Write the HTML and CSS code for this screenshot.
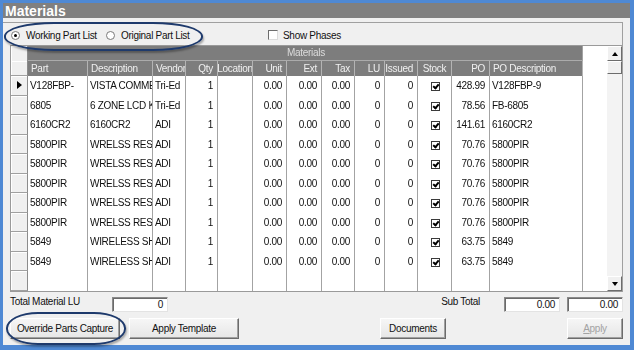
FILE: index.html
```html
<!DOCTYPE html>
<html lang="en">
<head>
    <meta charset="UTF-8">
    <meta name="viewport" content="width=device-width, initial-scale=1.0">
    <title>Materials</title>
    <link rel="stylesheet" href="styles.css">
</head>
<body>
    <div class="window">
        <div class="title">Materials</div>

        <div class="panel">
            <div class="frame">
                <!-- part list options -->
                <div class="options">
                    <label class="radio on"><span class="dot"></span>Working Part List</label>
                    <label class="radio"><span class="dot"></span>Original Part List</label>
                    <label class="check"><span class="box"></span>Show Phases</label>
                </div>

                <!-- materials grid -->
                <div class="grid">
                    <div class="sheet">
                        <div class="row band">
                            <div class="rh"></div>
                            <div class="cap">Materials</div>
                        </div>
                        <div class="row head">
                            <div class="rh"></div>
                            <div>Part</div>
                            <div>Description</div>
                            <div>Vendor</div>
                            <div class="num">Qty</div>
                            <div class="ctr">Location</div>
                            <div class="num">Unit</div>
                            <div class="num">Ext</div>
                            <div class="num">Tax</div>
                            <div class="num">LU</div>
                            <div class="num">Issued</div>
                            <div class="ctr">Stock</div>
                            <div class="num">PO</div>
                            <div>PO Description</div>
                        </div>

                        <div class="row">
                            <div class="rh cur"></div>
                            <div>V128FBP-</div>
                            <div>VISTA COMMERCIAL</div>
                            <div>Tri-Ed</div>
                            <div class="num">1</div>
                            <div></div>
                            <div class="num">0.00</div>
                            <div class="num">0.00</div>
                            <div class="num">0.00</div>
                            <div class="num">0</div>
                            <div class="num">0</div>
                            <div><i class="tick"></i></div>
                            <div class="num">428.99</div>
                            <div>V128FBP-9</div>
                        </div>
                        <div class="row">
                            <div class="rh"></div>
                            <div>6805</div>
                            <div>6 ZONE LCD KEYPAD</div>
                            <div>Tri-Ed</div>
                            <div class="num">1</div>
                            <div></div>
                            <div class="num">0.00</div>
                            <div class="num">0.00</div>
                            <div class="num">0.00</div>
                            <div class="num">0</div>
                            <div class="num">0</div>
                            <div><i class="tick"></i></div>
                            <div class="num">78.56</div>
                            <div>FB-6805</div>
                        </div>
                        <div class="row">
                            <div class="rh"></div>
                            <div>6160CR2</div>
                            <div>6160CR2</div>
                            <div>ADI</div>
                            <div class="num">1</div>
                            <div></div>
                            <div class="num">0.00</div>
                            <div class="num">0.00</div>
                            <div class="num">0.00</div>
                            <div class="num">0</div>
                            <div class="num">0</div>
                            <div><i class="tick"></i></div>
                            <div class="num">141.61</div>
                            <div>6160CR2</div>
                        </div>
                        <div class="row">
                            <div class="rh"></div>
                            <div>5800PIR</div>
                            <div>WRELSS RESIDENTIAL</div>
                            <div>ADI</div>
                            <div class="num">1</div>
                            <div></div>
                            <div class="num">0.00</div>
                            <div class="num">0.00</div>
                            <div class="num">0.00</div>
                            <div class="num">0</div>
                            <div class="num">0</div>
                            <div><i class="tick"></i></div>
                            <div class="num">70.76</div>
                            <div>5800PIR</div>
                        </div>
                        <div class="row">
                            <div class="rh"></div>
                            <div>5800PIR</div>
                            <div>WRELSS RESIDENTIAL</div>
                            <div>ADI</div>
                            <div class="num">1</div>
                            <div></div>
                            <div class="num">0.00</div>
                            <div class="num">0.00</div>
                            <div class="num">0.00</div>
                            <div class="num">0</div>
                            <div class="num">0</div>
                            <div><i class="tick"></i></div>
                            <div class="num">70.76</div>
                            <div>5800PIR</div>
                        </div>
                        <div class="row">
                            <div class="rh"></div>
                            <div>5800PIR</div>
                            <div>WRELSS RESIDENTIAL</div>
                            <div>ADI</div>
                            <div class="num">1</div>
                            <div></div>
                            <div class="num">0.00</div>
                            <div class="num">0.00</div>
                            <div class="num">0.00</div>
                            <div class="num">0</div>
                            <div class="num">0</div>
                            <div><i class="tick"></i></div>
                            <div class="num">70.76</div>
                            <div>5800PIR</div>
                        </div>
                        <div class="row">
                            <div class="rh"></div>
                            <div>5800PIR</div>
                            <div>WRELSS RESIDENTIAL</div>
                            <div>ADI</div>
                            <div class="num">1</div>
                            <div></div>
                            <div class="num">0.00</div>
                            <div class="num">0.00</div>
                            <div class="num">0.00</div>
                            <div class="num">0</div>
                            <div class="num">0</div>
                            <div><i class="tick"></i></div>
                            <div class="num">70.76</div>
                            <div>5800PIR</div>
                        </div>
                        <div class="row">
                            <div class="rh"></div>
                            <div>5800PIR</div>
                            <div>WRELSS RESIDENTIAL</div>
                            <div>ADI</div>
                            <div class="num">1</div>
                            <div></div>
                            <div class="num">0.00</div>
                            <div class="num">0.00</div>
                            <div class="num">0.00</div>
                            <div class="num">0</div>
                            <div class="num">0</div>
                            <div><i class="tick"></i></div>
                            <div class="num">70.76</div>
                            <div>5800PIR</div>
                        </div>
                        <div class="row">
                            <div class="rh"></div>
                            <div>5849</div>
                            <div>WIRELESS SHOCK</div>
                            <div>ADI</div>
                            <div class="num">1</div>
                            <div></div>
                            <div class="num">0.00</div>
                            <div class="num">0.00</div>
                            <div class="num">0.00</div>
                            <div class="num">0</div>
                            <div class="num">0</div>
                            <div><i class="tick"></i></div>
                            <div class="num">63.75</div>
                            <div>5849</div>
                        </div>
                        <div class="row">
                            <div class="rh"></div>
                            <div>5849</div>
                            <div>WIRELESS SHOCK</div>
                            <div>ADI</div>
                            <div class="num">1</div>
                            <div></div>
                            <div class="num">0.00</div>
                            <div class="num">0.00</div>
                            <div class="num">0.00</div>
                            <div class="num">0</div>
                            <div class="num">0</div>
                            <div><i class="tick"></i></div>
                            <div class="num">63.75</div>
                            <div>5849</div>
                        </div>
                        <div class="row last">
                            <div class="rh"></div>
                            <div></div><div></div><div></div><div></div><div></div><div></div>
                            <div></div><div></div><div></div><div></div><div></div><div></div><div></div>
                        </div>
                    </div>
                    <div class="blank"></div>
                    <div class="scroll">
                        <div class="sbtn up"></div>
                        <div class="thumb"></div>
                        <div class="track"></div>
                        <div class="sbtn down"></div>
                    </div>
                </div>
            </div>

            <div class="totals">
                <span class="lbl lu-lbl">Total Material LU</span>
                <span class="field">0</span>
                <span class="lbl sub">Sub Total</span>
                <span class="field">0.00</span>
                <span class="field">0.00</span>
            </div>

            <div class="actions">
                <button class="btn wide">Override Parts Capture</button>
                <button class="btn wide">Apply Template</button>
                <button class="btn docs">Documents</button>
                <button class="btn apply" disabled><u>A</u>pply</button>
            </div>
        </div>

        <!-- annotation rings -->
        <div class="ring ring-options"></div>
        <div class="ring ring-override"></div>
    </div>
</body>
</html>
```

FILE: styles.css
```css
* {
    box-sizing: border-box;
}
body {
    margin: 0;
    font-family: "Liberation Sans", Arial, sans-serif;
    font-size: 10px;
    letter-spacing: -0.3px;
    color: #0e0e26;
}
.window {
    position: relative;
    width: 634px;
    height: 350px;
    background-color: #4f89d4;
    padding: 3px 4px 5px 3px;
    display: flex;
    flex-direction: column;
}
.title {
    height: 15px;
    background-color: #808080;
    color: white;
    font-size: 14px;
    font-weight: bold;
    letter-spacing: 0;
    line-height: 16px;
    padding-left: 2px;
}
.panel {
    flex: 1;
    background-color: #f0f0f0;
    padding-top: 4px;
    display: flex;
    flex-direction: column;
}
.frame {
    width: 620px;
    border-top: 1px solid #a0a0a0;
    border-right: 1px solid #a0a0a0;
}

/* options row */
.options {
    height: 22px;
    padding: 2px 0 0 8px;
    display: grid;
    grid-template-columns: 95px 162px auto;
    align-items: center;
    color: #111;
}
.options label {
    display: flex;
    align-items: center;
}
.dot {
    position: relative;
    width: 9px;
    height: 9px;
    border-radius: 50%;
    border: 1px solid #7a7a7a;
    background-color: white;
    margin-right: 6px;
}
.radio.on .dot::after {
    content: '';
    position: absolute;
    left: 2px;
    top: 2px;
    width: 3px;
    height: 3px;
    border-radius: 50%;
    background-color: black;
}
.box {
    width: 10px;
    height: 10px;
    border: 1px solid;
    border-color: #6d6d6d #dcdcdc #dcdcdc #6d6d6d;
    background-color: white;
    margin-right: 5px;
}

/* grid */
.grid {
    margin-left: 7px;
    height: 247px;
    border: 1px solid #9a9a9a;
    border-right: none;
    display: flex;
    overflow: hidden;
}
.sheet {
    width: 572px;
    background-color: white;
    filter: grayscale(100%);
}
.row {
    display: grid;
    grid-template-columns: 17px 60px 65px 33px 32px 35px 34px 35px 33px 30px 33px 34px 38px 93px;
    height: 19.5px;
}
.row > div {
    border-right: 1px solid #a3a3a3;
    overflow: hidden;
    white-space: nowrap;
    padding-left: 2px;
    line-height: 19.5px;
}
.row > .num {
    display: flex;
    justify-content: flex-end;
    padding: 0 4px 0 0;
}
.row > .ctr {
    display: flex;
    justify-content: center;
    padding: 0;
}
.row.band,
.row.head {
    height: 15px;
}
.row.last {
    height: 20px;
}
.band > div,
.head > div {
    line-height: 15px;
}
.band .cap {
    grid-column: 2 / -1;
    background-color: #7d7d7d;
    color: #dcdcdc;
    text-align: center;
    border-bottom: 1px solid #ababab;
    line-height: 14px;
}
.head > div:not(.rh) {
    background-color: #7d7d7d;
    color: #f0f0f0;
    border-right-color: #b4b4b4;
}
.head > div:not(.rh):not(.num):not(.ctr) {
    padding-left: 3px;
}
.row > .rh {
    position: relative;
    padding: 0;
    background-color: #f0f0f0;
    border-right: 1px solid #8c8c8c;
    border-bottom: 1px solid #a0a0a0;
    box-shadow: inset 1px 1px white;
}
.band > .rh {
    border-bottom: none;
}
.rh.cur::before {
    content: '';
    position: absolute;
    left: 6px;
    top: 5px;
    border-left: 5px solid black;
    border-top: 4px solid transparent;
    border-bottom: 4px solid transparent;
}
.tick {
    position: relative;
    display: block;
    width: 9px;
    height: 9px;
    margin: 6px auto 0;
    border: 1px solid #3a3a3a;
    background-color: white;
}
.tick::after {
    content: '';
    position: absolute;
    left: 2px;
    top: 0;
    width: 2px;
    height: 4px;
    border: solid black;
    border-width: 0 2px 2px 0;
    transform: rotate(40deg);
}
.blank {
    width: 24px;
    background-color: white;
}
.scroll {
    width: 15px;
    background-color: #f3f3f3;
    display: flex;
    flex-direction: column;
}
.sbtn,
.thumb {
    background-color: #f0f0f0;
    border: 1px solid;
    border-color: white #6c6c6c #6c6c6c white;
}
.sbtn {
    height: 15px;
    display: flex;
    align-items: center;
    justify-content: center;
}
.thumb {
    height: 13px;
}
.track {
    flex: 1;
}
.sbtn.up::after,
.sbtn.down::after {
    content: '';
    border-left: 3.5px solid transparent;
    border-right: 3.5px solid transparent;
}
.sbtn.up::after {
    border-bottom: 4px solid black;
}
.sbtn.down::after {
    border-top: 4px solid black;
}

/* totals */
.totals {
    display: flex;
    align-items: flex-start;
    height: 16px;
    margin-top: 3px;
    padding: 0 7px;
    color: #111;
}
.lbl {
    line-height: 13px;
}
.lu-lbl {
    width: 102px;
}
.sub {
    margin-left: auto;
    margin-right: 24px;
}
.field {
    width: 56px;
    height: 15px;
    margin-top: 2px;
    background-color: white;
    border: 1px solid;
    border-color: #8a8a8a #e3e3e3 #e3e3e3 #8a8a8a;
    box-shadow: inset 1px 1px #6a6a6a;
    text-align: right;
    padding-right: 4px;
    line-height: 13px;
}
.field + .field {
    margin-left: 7px;
}

/* buttons */
.actions {
    display: flex;
    gap: 9px;
    margin-top: 7px;
    padding: 0 7px;
}
.btn {
    height: 21px;
    padding: 0;
    font-family: inherit;
    font-size: 10px;
    letter-spacing: -0.3px;
    color: #111;
    background: linear-gradient(#f6f6f6, #e6e6e6);
    border: 1px solid;
    border-color: white #6b6b6b #6b6b6b white;
    box-shadow: inset -1px -1px #a0a0a0;
}
.btn.wide {
    width: 110px;
}
.btn.docs {
    width: 66px;
    margin-left: auto;
    margin-right: 112px;
}
.btn.apply {
    width: 56px;
    color: #a3a3a3;
}

/* annotation rings */
.ring {
    position: absolute;
    border: 2px solid #1e3a6c;
    box-shadow: 1px 2px 2px rgba(0, 0, 0, 0.3);
}
.ring-options {
    left: 4px;
    top: 22px;
    width: 199px;
    height: 29px;
    border-radius: 50px / 14px;
}
.ring-override {
    left: 6px;
    top: 312px;
    width: 120px;
    height: 33px;
    border-radius: 32px / 16px;
}
```
